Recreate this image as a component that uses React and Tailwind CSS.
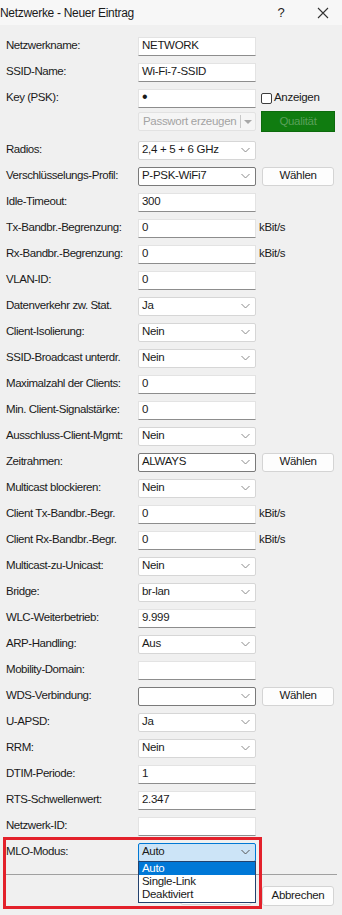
import React from "react";

const font = { fontFamily: '"Liberation Sans", Arial, sans-serif' };

const Chevron = ({ color = "#8a8a8a" }) => (
  <svg width="9" height="6" viewBox="0 0 9 6" className="shrink-0">
    <path d="M0.5 1 L4.5 5 L8.5 1" fill="none" stroke={color} strokeWidth="1" />
  </svg>
);

const TextField = ({ value }) => (
  <div className="w-[118px] h-[19px] bg-white border border-[#e3e3e3] border-b-[#8d8d8d] flex items-center px-[3px] text-[11.5px] tracking-[-0.3px] text-[#1a1a1a]">
    {value}
  </div>
);

const Select = ({ value, editable, active }) => (
  <div
    className={
      "w-[118px] h-[19px] flex items-center justify-between pl-[3px] pr-[5px] text-[11.5px] tracking-[-0.3px] text-[#1a1a1a] rounded-[2px] " +
      (active
        ? "bg-[#cce4f7] border border-[#0078d4]"
        : editable
          ? "bg-white border border-[#7a7a7a]"
          : "bg-white border border-[#d6d6d6]")
    }
  >
    <span>{value}</span>
    <Chevron color={active ? "#555" : "#8a8a8a"} />
  </div>
);

const Button = ({ children, className = "" }) => (
  <div
    className={
      "w-[72px] h-[19px] rounded-[3px] border border-[#d4d4d4] bg-[#fdfdfd] flex items-center justify-center text-[11.5px] tracking-[-0.3px] text-[#1a1a1a] " +
      className
    }
  >
    {children}
  </div>
);

const Unit = () => <span className="ml-[3px] text-[11.5px] tracking-[-0.3px] text-[#1a1a1a]">kBit/s</span>;

const rows = [
  { label: "Netzwerkname:", type: "text", value: "NETWORK" },
  { label: "SSID-Name:", type: "text", value: "Wi-Fi-7-SSID" },
  { label: "Key (PSK):", type: "key" },
  { label: "", type: "password" },
  { label: "Radios:", type: "select", value: "2,4 + 5 + 6 GHz" },
  { label: "Verschlüsselungs-Profil:", type: "combo", value: "P-PSK-WiFi7", btn: true },
  { label: "Idle-Timeout:", type: "text", value: "300" },
  { label: "Tx-Bandbr.-Begrenzung:", type: "text", value: "0", unit: true },
  { label: "Rx-Bandbr.-Begrenzung:", type: "text", value: "0", unit: true },
  { label: "VLAN-ID:", type: "text", value: "0" },
  { label: "Datenverkehr zw. Stat.", type: "select", value: "Ja" },
  { label: "Client-Isolierung:", type: "select", value: "Nein" },
  { label: "SSID-Broadcast unterdr.", type: "select", value: "Nein" },
  { label: "Maximalzahl der Clients:", type: "text", value: "0" },
  { label: "Min. Client-Signalstärke:", type: "text", value: "0" },
  { label: "Ausschluss-Client-Mgmt:", type: "select", value: "Nein" },
  { label: "Zeitrahmen:", type: "combo", value: "ALWAYS", btn: true },
  { label: "Multicast blockieren:", type: "select", value: "Nein" },
  { label: "Client Tx-Bandbr.-Begr.", type: "text", value: "0", unit: true },
  { label: "Client Rx-Bandbr.-Begr.", type: "text", value: "0", unit: true },
  { label: "Multicast-zu-Unicast:", type: "select", value: "Nein" },
  { label: "Bridge:", type: "select", value: "br-lan" },
  { label: "WLC-Weiterbetrieb:", type: "text", value: "9.999" },
  { label: "ARP-Handling:", type: "select", value: "Aus" },
  { label: "Mobility-Domain:", type: "text", value: "" },
  { label: "WDS-Verbindung:", type: "combo", value: "", btn: true },
  { label: "U-APSD:", type: "select", value: "Ja" },
  { label: "RRM:", type: "select", value: "Nein" },
  { label: "DTIM-Periode:", type: "text", value: "1" },
  { label: "RTS-Schwellenwert:", type: "text", value: "2.347" },
  { label: "Netzwerk-ID:", type: "text", value: "" },
  { label: "MLO-Modus:", type: "active", value: "Auto" },
];

const Row = ({ row }) => {
  if (row.type === "password") {
    return (
      <div className="h-[26px] flex items-start pl-[138px]">
        <div className="w-[118px] h-[19px] mt-[1px] bg-[#f5f5f5] border border-[#e2e2e2] rounded-[2px] flex items-center text-[11.5px] tracking-[-0.3px] text-[#a3a3a3]">
          <span className="flex-1 pl-[4px] whitespace-nowrap">Passwort erzeugen</span>
          <span className="w-px h-[13px] bg-[#c8c8c8]" />
          <svg width="14" height="8" viewBox="0 0 14 8">
            <path d="M3 2 L11 2 L7 6 Z" fill="#a8a8a8" />
          </svg>
        </div>
        <div className="ml-[5px] w-[74px] h-[21px] bg-[#107c10] border border-[#0d6a0d] flex items-center justify-center text-[11.5px] tracking-[-0.3px] text-[#5aa05a]">
          Qualität
        </div>
      </div>
    );
  }
  return (
    <div className="h-[26px] flex items-center pl-[6px]">
      <span className="w-[132px] text-[11.5px] text-[#1a1a1a] tracking-[-0.45px] whitespace-nowrap">{row.label}</span>
      {row.type === "text" && <TextField value={row.value} />}
      {row.type === "key" && (
        <>
          <TextField value={<span className="text-[16px] leading-none -mt-[3px]">•</span>} />
          <div className="ml-[5px] w-[11px] h-[11px] rounded-[2px] border border-[#3c3c3c] bg-white" />
          <span className="ml-[2px] text-[11.5px] tracking-[-0.3px] text-[#1a1a1a]">Anzeigen</span>
        </>
      )}
      {row.type === "select" && <Select value={row.value} />}
      {row.type === "combo" && <Select value={row.value} editable />}
      {row.type === "active" && <Select value={row.value} active />}
      {row.unit && <Unit />}
      {row.btn && <Button className="ml-[6px]">Wählen</Button>}
    </div>
  );
};

export default function App() {
  return (
    <div className="relative w-[342px] h-[915px] bg-[#f0f0f0] overflow-hidden" style={font}>
      <div className="h-[25px] bg-[#f7f7f7] flex items-center">
        <span className="flex-1 text-[12px] tracking-[-0.3px] text-[#1a1a1a]">Netzwerke - Neuer Eintrag</span>
        <span className="w-[20px] text-center text-[13px] text-[#222]">?</span>
        <svg width="12" height="12" viewBox="0 0 12 12" className="ml-[26px] mr-[13px]">
          <path d="M1 1 L11 11 M11 1 L1 11" stroke="#333" strokeWidth="1.1" />
        </svg>
      </div>

      <div className="pt-[8px] flex flex-col">
        {rows.map((row, i) => (
          <Row key={i} row={row} />
        ))}
      </div>

      <div className="mx-[5px] mt-[9px] h-px bg-[#a0a0a0]" />

      <div className="mt-[11px] flex justify-end pr-[8px] gap-[10px]">
        <Button className="w-[70px] border-[#0078d4]">OK</Button>
        <Button className="h-[20px]">Abbrechen</Button>
      </div>

      {/* open dropdown list of MLO-Modus */}
      <div className="absolute left-[138px] top-[861px] w-[118px] bg-white border border-[#23426e] text-[11.5px] tracking-[-0.3px] leading-[13px]">
        <div className="bg-[#0078d7] text-white pl-[3px]">Auto</div>
        <div className="pl-[3px] text-[#1a1a1a]">Single-Link</div>
        <div className="pl-[3px] text-[#1a1a1a] pb-[1px]">Deaktiviert</div>
      </div>

      {/* red highlight */}
      <div className="absolute left-[3px] top-[837px] w-[259px] h-[72px] border-[3px] border-[#e3212b]" />
    </div>
  );
}
